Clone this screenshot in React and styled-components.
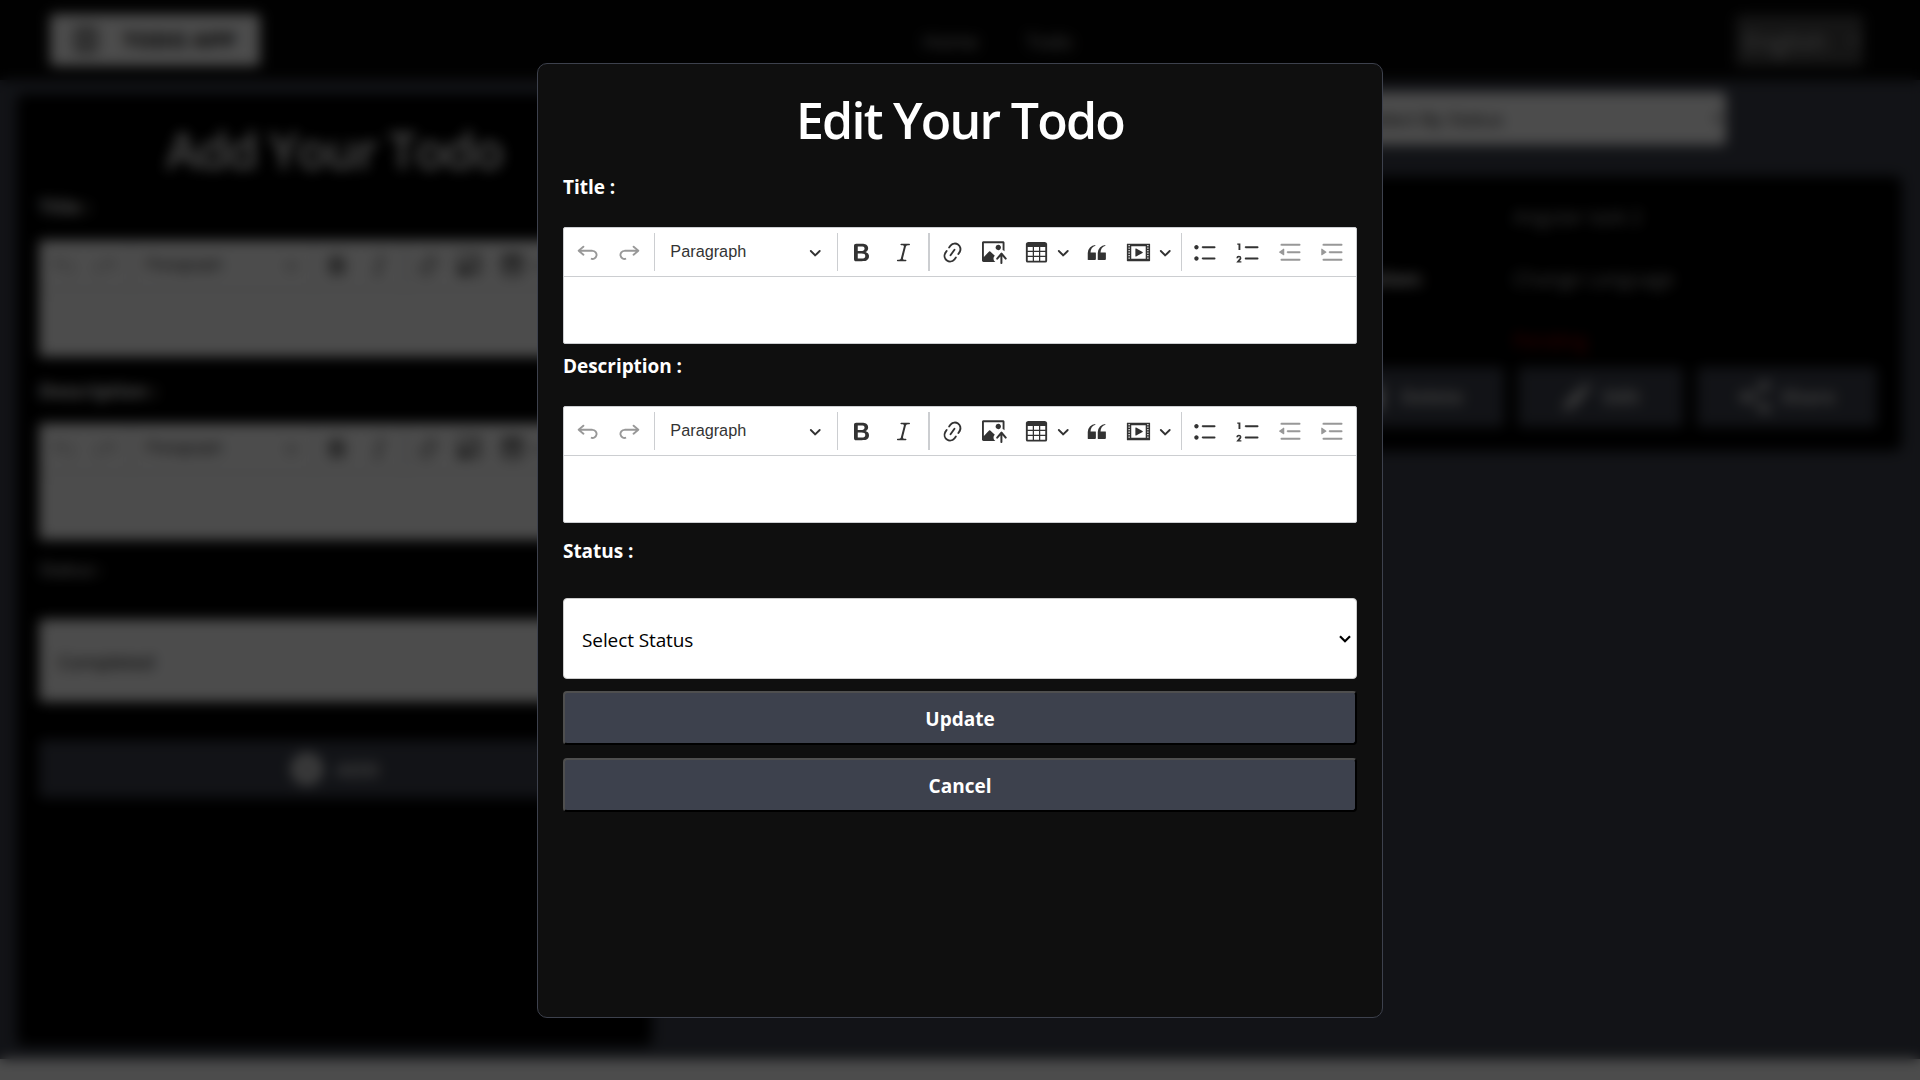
import React from "react";
import styled, { createGlobalStyle } from "styled-components";

const GlobalStyle = createGlobalStyle`
  *, *::before, *::after { box-sizing: border-box; }
  html, body { height: 100%; overflow: hidden; }
  body {
    margin: 0;
    background: #fff;
    color: #fff;
    font-family: "Open Sans", "Noto Sans", sans-serif;
    font-size: 20px;
  }
  h1, p { margin: 0; }
  button, select { font-family: inherit; }
`;

/* ---------- page ---------- */

const Page = styled.div`
  height: 1059px;
  background: #3d414d;
`;

const Header = styled.header`
  height: 80px;
  padding: 0 57px 0 50px;
  background: #050505;
  display: grid;
  grid-template-columns: 1fr auto 1fr;
  align-items: center;
`;

const Logo = styled.div`
  width: 210px;
  height: 52px;
  padding-left: 24px;
  border-radius: 4px;
  background: #fff;
  color: #111;
  display: flex;
  align-items: center;
  gap: 25px;
  font-size: 22px;
  font-weight: 700;
  line-height: 48px;
  white-space: nowrap;
`;

const LogoMark = styled.svg`
  width: 24px;
  height: 28px;
  flex: none;
`;

const LogoText = styled.span`
  margin-top: -3px;
`;

const Nav = styled.nav`
  display: flex;
  gap: 48px;
  padding-left: 82px;
  margin-top: 2px;
  color: #c4c4c4;
  font-size: 20px;
`;

const NavItem = styled.span`
  letter-spacing: -0.3px;
`;

const Language = styled.select`
  justify-self: end;
  width: 127px;
  height: 51px;
  padding: 2px 4px 0;
  border: 0;
  border-radius: 4px;
  background: #484848;
  color: #c4c4c4;
  font-size: 25px;
`;

const Columns = styled.main`
  display: grid;
  grid-template-columns: 635px 1fr;
  gap: 20px;
  padding: 14px 18px 0 17px;
`;

const AddCard = styled.section`
  height: 952px;
  padding: 0 22px;
  border-radius: 6px;
  background: #000;
`;

const AddHeading = styled.h1`
  height: 68px;
  margin-top: 22px;
  font-size: 50px;
  font-weight: 600;
  line-height: 68px;
  text-align: center;
  white-space: nowrap;
  letter-spacing: -1.4px;
`;

const List = styled.section`
  display: flex;
  flex-direction: column;
  align-items: flex-end;
`;

const FilterSelect = styled.select`
  width: 400px;
  height: 53px;
  margin: -2px 176px 31px 0;
  padding-left: 34px;
  border: 0;
  border-radius: 4px;
  background: #fff;
  color: #111;
  font-size: 19px;
`;

const TodoCard = styled.article`
  width: 1182px;
  height: 275px;
  padding: 9px 25px 0 400px;
  border-radius: 8px;
  background: #000;
`;

const TodoRow = styled.div`
  display: grid;
  grid-template-columns: 393px 1fr;
  height: 62px;
  align-items: center;
  color: ${(p) => p.$color || "#b8b8b8"};
  font-size: 19.5px;
`;

const TodoKey = styled.span`
  padding-left: 183px;
  color: #fff;
  font-size: 20px;
  font-weight: 700;
`;

const Actions = styled.div`
  display: flex;
  justify-content: flex-end;
  gap: 14px;
  margin-top: -4px;
`;

const ActionButton = styled.button`
  width: ${(p) => p.$width}px;
  height: 60px;
  border: 0;
  border-radius: 4px;
  background: #3d414d;
  color: #d6d6d6;
  display: flex;
  align-items: center;
  justify-content: center;
  gap: 10px;
  font-size: 19px;
  font-weight: 700;

  svg { width: 32px; height: 32px; fill: currentColor; }
`;

const AddButton = styled(ActionButton)`
  width: 100%;
  height: 58px;
  margin-top: 38px;
  padding-right: 5px;
  gap: 13px;
  font-size: 20px;
  text-transform: uppercase;
`;

/* ---------- form parts ---------- */

const Label = styled.p`
  height: 28px;
  margin: ${(p) => p.$top}px 0 ${(p) => p.$bottom}px;
  font-size: 19px;
  font-weight: ${(p) => p.$weight || 700};
  line-height: 28px;
  letter-spacing: -0.05px;
`;

const StatusSelect = styled.div`
  width: 100%;
  height: ${(p) => p.$height}px;
  padding: 2px 5px 0 18px;
  border: 1px solid #ccc;
  border-radius: 4px;
  background: #fff;
  color: #000;
  display: flex;
  align-items: center;
  justify-content: space-between;
  font-size: 19px;
  letter-spacing: -0.1px;
`;

const SelectArrow = styled.svg`
  width: 12px;
  height: 8px;
  margin-top: -2px;
  fill: none;
  stroke: currentColor;
  stroke-width: 2.2;
`;

const EditorBox = styled.div`
  height: 117px;
  border: 1px solid #ccced1;
  border-radius: 2px;
  background: #fff;
  overflow: hidden;
`;

const Toolbar = styled.div`
  height: 49px;
  padding-left: 5px;
  border-bottom: 1px solid #ccced1;
  display: flex;
  align-items: center;
  gap: 4.4px;
`;

const ListTools = styled.span`
  display: flex;
  gap: 4.9px;
`;

const Tool = styled.span`
  flex: none;
  width: ${(p) => (p.$split ? 55.8 : 37.4)}px;
  height: 37px;
  padding-left: 6.2px;
  display: flex;
  align-items: center;
  gap: 8.2px;
  opacity: ${(p) => (p.$disabled ? 0.5 : 1)};
`;

const ToolIcon = styled.svg`
  flex: none;
  width: 25px;
  height: 25px;
  fill: #333;
`;

const Chevron = styled.svg`
  flex: none;
  width: 12.5px;
  height: 12.5px;
  fill: #333;
`;

const Divider = styled.span`
  flex: none;
  width: ${(p) => p.$width || 1}px;
  height: 38px;
  margin: 0 ${(p) => (p.$width ? 0.2 : 1)}px 0 1px;
  background: #ccced1;
`;

const HeadingPicker = styled.span`
  flex: none;
  width: 171.3px;
  height: 37px;
  padding: 0 9.4px 0 10.4px;
  display: flex;
  align-items: center;
  justify-content: space-between;
  color: #333;
  font-family: "Liberation Sans", Arial, sans-serif;
  font-size: 16.25px;
  line-height: 36px;
`;

const PickerText = styled.span`
  margin-top: -2px;
`;

const ICONS = {
  undo: "m5.042 9.367 2.189 1.837a.75.75 0 0 1-.965 1.149l-3.788-3.18a.747.747 0 0 1-.21-.284.75.75 0 0 1 .17-.945L6.23 4.762a.75.75 0 1 1 .964 1.15L4.863 7.866h8.917A.75.75 0 0 1 14 7.9a4 4 0 1 1-1.477 7.718l.344-1.489a2.5 2.5 0 1 0 1.094-4.73l.008-.032H5.042z",
  redo: "m14.958 9.367-2.189 1.837a.75.75 0 0 0 .965 1.149l3.788-3.18a.747.747 0 0 0 .21-.284.75.75 0 0 0-.17-.945L13.77 4.762a.75.75 0 1 0-.964 1.15l2.331 1.955H6.22A.75.75 0 0 0 6 7.9a4 4 0 1 0 1.477 7.718l-.344-1.489A2.5 2.5 0 1 1 6.039 9.4l-.008-.032h8.927z",
  bold: "M10.187 17H5.773c-.637 0-1.092-.138-1.364-.415-.273-.277-.409-.718-.409-1.323V4.738c0-.617.14-1.062.419-1.332.279-.27.73-.406 1.354-.406h4.68c.69 0 1.288.041 1.793.124.506.083.96.242 1.36.478.341.197.644.447.906.75a3.262 3.262 0 0 1 .808 2.162c0 1.401-.722 2.426-2.167 3.075C15.05 10.175 16 11.315 16 13.01a3.756 3.756 0 0 1-2.296 3.504 6.1 6.1 0 0 1-1.517.377c-.571.073-1.238.11-2 .11zm-.217-6.217H7v4.087h3.069c1.977 0 2.965-.69 2.965-2.072 0-.707-.256-1.22-.768-1.537-.512-.319-1.277-.478-2.296-.478zM7 5.13v3.619h2.606c.729 0 1.292-.067 1.69-.2a1.6 1.6 0 0 0 .91-.765c.165-.267.247-.566.247-.897 0-.707-.26-1.176-.778-1.409-.519-.232-1.31-.348-2.375-.348H7z",
  italic: "m9.586 14.633.021.004c-.036.335.095.655.393.962.082.083.173.15.274.201h1.474a.6.6 0 1 1 0 1.2H5.304a.6.6 0 0 1 0-1.2h1.15c.474-.07.809-.182 1.005-.334.157-.122.291-.32.404-.597l2.416-9.55a1.053 1.053 0 0 0-.281-.823 1.12 1.12 0 0 0-.442-.296H8.15a.6.6 0 0 1 0-1.2h6.443a.6.6 0 1 1 0 1.2h-1.195c-.376.056-.65.155-.823.296-.215.175-.423.439-.623.79l-2.366 9.347z",
  link: "m11.077 15 .991-1.416a.75.75 0 1 1 1.229.86l-1.148 1.64a.748.748 0 0 1-.217.206 5.251 5.251 0 0 1-8.503-5.955.741.741 0 0 1 .12-.274l1.147-1.639a.75.75 0 1 1 1.228.86L4.933 10.7l.006.003a3.75 3.75 0 0 0 6.132 4.294l.006.004zm5.494-5.335a.748.748 0 0 1-.12.274l-1.147 1.639a.75.75 0 1 1-1.228-.86l.86-1.23a3.75 3.75 0 0 0-6.144-4.301l-.86 1.229a.75.75 0 0 1-1.229-.86l1.148-1.64a.748.748 0 0 1 .217-.206 5.251 5.251 0 0 1 8.503 5.955zm-4.563-2.532a.75.75 0 0 1 .184 1.045l-3.155 4.505a.75.75 0 1 1-1.229-.86l3.155-4.506a.75.75 0 0 1 1.045-.184z",
  image: "M1.201 1C.538 1 0 1.47 0 2.1v14.363c0 .64.534 1.037 1.186 1.037h9.494a2.97 2.97 0 0 1-.414-.287 2.998 2.998 0 0 1-1.055-2.03 3.003 3.003 0 0 1 .693-2.185l.383-.455-.02.018-3.65-3.41a.695.695 0 0 0-.957-.034L1.5 13.6V2.5h15v5.535a2.97 2.97 0 0 1 1.412.932l.088.105V2.1c0-.63-.547-1.1-1.2-1.1H1.202Zm11.713 2.803a2.146 2.146 0 0 0-2.049 1.992 2.14 2.14 0 0 0 1.28 2.096 2.13 2.13 0 0 0 2.644-3.11 2.134 2.134 0 0 0-1.875-.978ZM15.522 19.1a.79.79 0 0 0 .79-.79v-5.373l2.059 2.455a.79.79 0 1 0 1.211-1.015l-3.352-3.995a.79.79 0 0 0-.995-.179.784.784 0 0 0-.299.221l-3.35 3.99a.79.79 0 1 0 1.21 1.017l1.936-2.306v5.185c0 .436.353.79.79.79Z",
  table: "M3 5.5v3h4v-3H3Zm0 4v3h4v-3H3Zm0 4v3h4v-3H3Zm5 3h4v-3H8v3Zm5 0h4v-3h-4v3Zm4-4v-3h-4v3h4Zm0-4v-3h-4v3h4Zm1.5 8A1.5 1.5 0 0 1 17 18H3a1.5 1.5 0 0 1-1.5-1.5V3c.222-.863 1.068-1.5 2-1.5h13c.932 0 1.778.637 2 1.5v13.5Zm-6.5-4v-3H8v3h4Zm0-4v-3H8v3h4Z",
  quote: "M3 10.423a6.5 6.5 0 0 1 6.056-6.408l.038.67C6.448 5.423 5.354 7.663 5.22 10H9c.552 0 .5.432.5.986v4.511c0 .554-.448.503-1 .503h-5c-.552 0-.5-.449-.5-1.003v-4.574zm8 0a6.5 6.5 0 0 1 6.056-6.408l.038.67c-2.646.739-3.74 2.979-3.873 5.315H17c.552 0 .5.432.5.986v4.511c0 .554-.448.503-1 .503h-5c-.552 0-.5-.449-.5-1.003v-4.574z",
  media: "M18.68 3.03c.6 0 .59-.03.59.55v12.84c0 .59.01.56-.59.56H1.29c-.6 0-.59.03-.59-.56V3.58c0-.58-.01-.55.6-.55h17.38ZM15.77 15V5H4.2v10h11.57ZM2 4v1h1V4H2Zm0 2v1h1V6H2Zm0 2v1h1V8H2Zm0 2v1h1v-1H2Zm0 2v1h1v-1H2Zm0 2v1h1v-1H2ZM17 4v1h1V4h-1Zm0 2v1h1V6h-1Zm0 2v1h1V8h-1Zm0 2v1h1v-1h-1Zm0 2v1h1v-1h-1Zm0 2v1h1v-1h-1ZM7.5 7.177a.4.4 0 0 1 .593-.351l5.133 2.824a.4.4 0 0 1 0 .7l-5.133 2.824a.4.4 0 0 1-.593-.35V7.176v.001Z",
  bulleted: "M7 5.75c0 .414.336.75.75.75h9.5a.75.75 0 1 0 0-1.5h-9.5a.75.75 0 0 0-.75.75zm-6 0C1 4.784 1.777 4 2.75 4c.966 0 1.75.777 1.75 1.75 0 .966-.777 1.75-1.75 1.75C1.784 7.5 1 6.723 1 5.75zm6 9c0 .414.336.75.75.75h9.5a.75.75 0 1 0 0-1.5h-9.5a.75.75 0 0 0-.75.75zm-6 0c0-.966.777-1.75 1.75-1.75.966 0 1.75.777 1.75 1.75 0 .966-.777 1.75-1.75 1.75-.966 0-1.75-.777-1.75-1.75z",
  numbered: "M7 5.75c0 .414.336.75.75.75h9.5a.75.75 0 1 0 0-1.5h-9.5a.75.75 0 0 0-.75.75zM3.5 3v5H2V3.7H1v-1h2.5V3zM.343 17.857l2.59-3.257H2.92a.6.6 0 1 0-1.04 0H.302a2 2 0 1 1 3.995 0h-.001c-.048.405-.16.734-.333.988-.175.254-.59.692-1.244 1.312H4.3v1h-4l.043-.043zM7 14.75a.75.75 0 0 1 .75-.75h9.5a.75.75 0 1 1 0 1.5h-9.5a.75.75 0 0 1-.75-.75z",
  outdent: "M2 3.75c0 .414.336.75.75.75h14.5a.75.75 0 1 0 0-1.5H2.75a.75.75 0 0 0-.75.75zm5 6c0 .414.336.75.75.75h9.5a.75.75 0 1 0 0-1.5h-9.5a.75.75 0 0 0-.75.75zM2.75 16.5h14.5a.75.75 0 1 0 0-1.5H2.75a.75.75 0 1 0 0 1.5zm1.618-9.55L.98 9.358a.4.4 0 0 0 .013.661l3.39 2.207A.4.4 0 0 0 5 11.892V7.275a.4.4 0 0 0-.632-.326z",
  indent: "M2 3.75c0 .414.336.75.75.75h14.5a.75.75 0 1 0 0-1.5H2.75a.75.75 0 0 0-.75.75zm5 6c0 .414.336.75.75.75h9.5a.75.75 0 1 0 0-1.5h-9.5a.75.75 0 0 0-.75.75zM2.75 16.5h14.5a.75.75 0 1 0 0-1.5H2.75a.75.75 0 1 0 0 1.5zM1.632 6.95 5.02 9.358a.4.4 0 0 1-.013.661l-3.39 2.207A.4.4 0 0 1 1 11.892V7.275a.4.4 0 0 1 .632-.326z",
};

const DropArrow = () => (
  <Chevron viewBox="0 0 10 10">
    <path d="M.941 4.523a.75.75 0 1 1 1.06-1.06l3.006 3.005 3.005-3.005a.75.75 0 1 1 1.06 1.06l-3.549 3.55a.75.75 0 0 1-1.168-.136L.941 4.523z" />
  </Chevron>
);

function ToolItem({ icon, disabled, split }) {
  return (
    <Tool $disabled={disabled} $split={split}>
      <ToolIcon viewBox="0 0 20 20">
        <path d={ICONS[icon]} />
      </ToolIcon>
      {split && <DropArrow />}
    </Tool>
  );
}

function Editor() {
  return (
    <EditorBox>
      <Toolbar>
        <ToolItem icon="undo" disabled />
        <ToolItem icon="redo" disabled />
        <Divider />
        <HeadingPicker>
          <PickerText>Paragraph</PickerText>
          <DropArrow />
        </HeadingPicker>
        <Divider />
        <ToolItem icon="bold" />
        <ToolItem icon="italic" />
        <Divider $width={2} />
        <ToolItem icon="link" />
        <ToolItem icon="image" />
        <ToolItem icon="table" split />
        <ToolItem icon="quote" />
        <ToolItem icon="media" split />
        <Divider />
        <ListTools>
          <ToolItem icon="bulleted" />
          <ToolItem icon="numbered" />
          <ToolItem icon="outdent" disabled />
          <ToolItem icon="indent" disabled />
        </ListTools>
      </Toolbar>
    </EditorBox>
  );
}

function StatusField({ height, value }) {
  return (
    <StatusSelect $height={height} role="combobox">
      {value}
      <SelectArrow viewBox="0 0 12 8">
        <path d="M1 1.200 6 6.200l5-5" />
      </SelectArrow>
    </StatusSelect>
  );
}

/* ---------- modal ---------- */

const Overlay = styled.div`
  position: fixed;
  inset: 0;
  padding-top: 63px;
  display: flex;
  justify-content: center;
  align-items: flex-start;
  background: rgba(0, 0, 0, 0.7);
  backdrop-filter: blur(6.25px);
`;

const Modal = styled.div`
  width: 846px;
  height: 955px;
  padding: 22px 25px 0;
  border: 1px solid #3d414d;
  border-radius: 10px;
  background: #0f0f0f;
`;

const ModalHeading = styled.h1`
  height: 69px;
  font-size: 50px;
  font-weight: 600;
  line-height: 68px;
  text-align: center;
  white-space: nowrap;
  letter-spacing: -1.75px;
`;

const ModalButton = styled.button`
  display: block;
  width: 100%;
  height: 54px;
  margin-top: ${(p) => p.$top}px;
  padding: 2px 0 0;
  border: 2px solid;
  border-color: #4f4f4f #000 #000 #4f4f4f;
  border-radius: 4px;
  background: #3d414d;
  color: #fff;
  font-size: 19px;
  font-weight: 700;
`;

export default function App() {
  return (
    <>
      <GlobalStyle />
      <Page>
        <Header>
          <Logo>
            <LogoMark viewBox="0 0 24 28">
              <rect x="2" y="2" width="20" height="24" rx="3" fill="#aaa" stroke="#888" strokeWidth="4" />
            </LogoMark>
            <LogoText>TODO APP</LogoText>
          </Logo>
          <Nav>
            <NavItem>Home</NavItem>
            <NavItem>Todo</NavItem>
          </Nav>
          <Language defaultValue="en">
            <option value="en">English</option>
          </Language>
        </Header>
        <Columns>
          <AddCard>
            <AddHeading>Add Your Todo</AddHeading>
            <Label $top={9} $bottom={19}>Title :</Label>
            <Editor />
            <Label $top={20} $bottom={18}>Description :</Label>
            <Editor />
            <Label $top={15} $bottom={36} $weight={400}>Status :</Label>
            <StatusField height={83} value="Completed" />
            <AddButton>
              <svg viewBox="0 0 32 32">
                <path fillRule="evenodd" d="M16 0a16 16 0 1 0 0 32 16 16 0 0 0 0-32zM15 9h2v6h6v2h-6v6h-2v-6H9v-2h6z" />
              </svg>
              Add
            </AddButton>
          </AddCard>
          <List>
            <FilterSelect defaultValue="all">
              <option value="all">Select By Status</option>
            </FilterSelect>
            <TodoCard>
              <TodoRow><TodoKey>Title:</TodoKey>Angular task 2</TodoRow>
              <TodoRow><TodoKey>Description:</TodoKey>Change Language</TodoRow>
              <TodoRow $color="#b40000"><TodoKey>Status:</TodoKey>Pending</TodoRow>
              <Actions>
                <ActionButton $width={186}>
                  <svg viewBox="0 0 32 32"><path d="M5 6h6l2-3h6l2 3h6v3H5zM7 11h18l-1 18H8z" /></svg>
                  Delete
                </ActionButton>
                <ActionButton $width={165}>
                  <svg viewBox="0 0 32 32"><path d="M2 30l3-9L20 6l6 6-15 15zM22 4l3-3 6 6-3 3z" /></svg>
                  Edit
                </ActionButton>
                <ActionButton $width={180}>
                  <svg viewBox="0 0 32 32">
                    <path d="M6 16 26 5M6 16l20 11" stroke="currentColor" strokeWidth="3" />
                    <circle cx="6" cy="16" r="5" />
                    <circle cx="26" cy="5" r="5" />
                    <circle cx="26" cy="27" r="5" />
                  </svg>
                  Share
                </ActionButton>
              </Actions>
            </TodoCard>
          </List>
        </Columns>
      </Page>
      <Overlay>
        <Modal>
          <ModalHeading>Edit Your Todo</ModalHeading>
          <Label $top={18} $bottom={26}>Title :</Label>
          <Editor />
          <Label $top={8} $bottom={26}>Description :</Label>
          <Editor />
          <Label $top={14} $bottom={33}>Status :</Label>
          <StatusField height={81} value="Select Status" />
          <ModalButton $top={12}>Update</ModalButton>
          <ModalButton $top={13}>Cancel</ModalButton>
        </Modal>
      </Overlay>
    </>
  );
}
